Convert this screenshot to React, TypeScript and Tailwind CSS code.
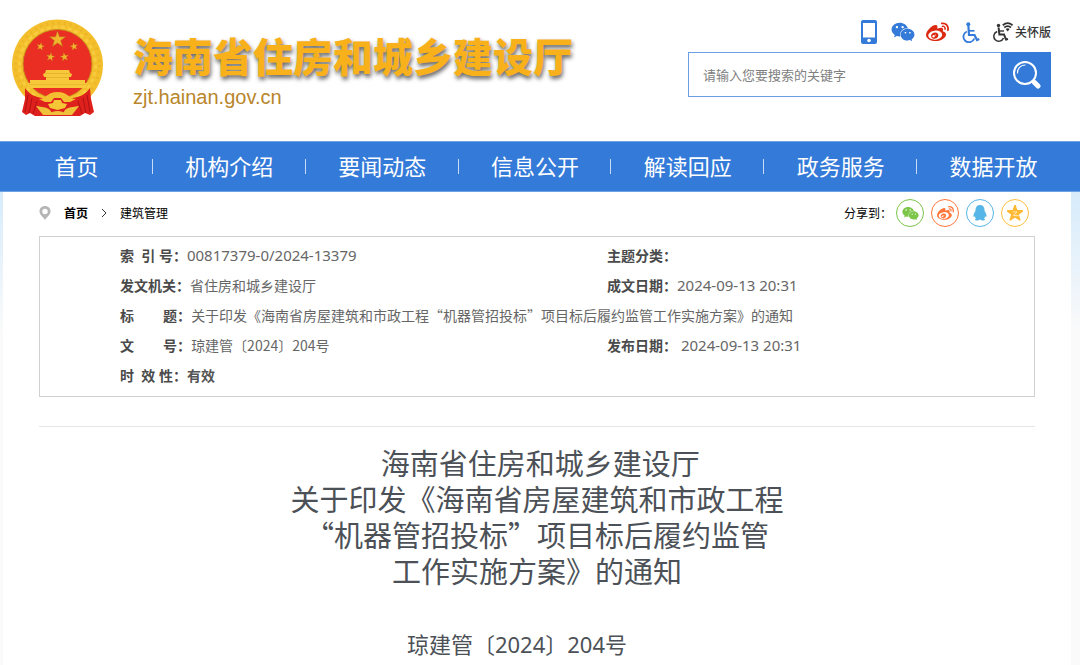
import React from 'react';
import { FaWeibo, FaWeixin } from 'react-icons/fa';

// ============================================================================
// Notice page of the housing department site: header, nav, index card, title
// ============================================================================

const NAV = ['首页', '机构介绍', '要闻动态', '信息公开', '解读回应', '政务服务', '数据开放'];

interface Field {
  label: string;
  value: string;
  numeric?: boolean;
  strong?: boolean;
}

const ROWS: Field[][] = [
  [
    { label: '索  引 号：', value: '00817379-0/2024-13379', numeric: true },
    { label: '主题分类：', value: '' },
  ],
  [
    { label: '发文机关：', value: '省住房和城乡建设厅' },
    { label: '成文日期：', value: '2024-09-13 20:31', numeric: true },
  ],
  [{ label: '标        题：', value: '关于印发《海南省房屋建筑和市政工程“机器管招投标”项目标后履约监管工作实施方案》的通知' }],
  [
    { label: '文        号：', value: '琼建管〔2024〕204号' },
    { label: '发布日期：', value: ' 2024-09-13 20:31', numeric: true },
  ],
  [{ label: '时  效 性：', value: '有效', strong: true }],
];

const TITLE = [
  ' 海南省住房和城乡建设厅',
  '关于印发《海南省房屋建筑和市政工程',
  '“机器管招投标”项目标后履约监管',
  '工作实施方案》的通知',
].join('\n');

const STAR = 'M0,-10 L2.4,-3.1 L9.5,-3.1 L3.8,1.2 L5.9,8.1 L0,4 L-5.9,8.1 L-3.8,1.2 L-9.5,-3.1 L-2.4,-3.1 Z';

const Emblem = () => (
  <svg viewBox="0 0 91 98" className="w-[91px] h-[98px] shrink-0" role="img" aria-label="国徽">
    <circle cx="45.500" cy="46" r="45.500" fill="#f3bf2c" />
    <circle cx="45.500" cy="46" r="42" fill="none" stroke="#e0a31f" strokeWidth="3" strokeDasharray="2 4" opacity=".3" />
    <circle cx="45.500" cy="46" r="38" fill="none" stroke="#ffdc55" strokeWidth="3" strokeDasharray="4 3" opacity=".45" />
    <circle cx="45.500" cy="45" r="34.500" fill="#ea2e23" stroke="#c98a1c" strokeWidth="1" />
    <g fill="#f0b62c" stroke="#bd6a1b" strokeWidth=".6">
      <path d={STAR} transform="translate(45.500 20.500) scale(.85)" />
      <path d={STAR} transform="translate(28.500 27.500) rotate(12) scale(.42)" />
      <path d={STAR} transform="translate(62 27.500) rotate(-12) scale(.42)" />
      <path d={STAR} transform="translate(38.500 38) rotate(10) scale(.45)" />
      <path d={STAR} transform="translate(52.500 38) rotate(-10) scale(.45)" />
    </g>
    {/* gate */}
    <path d="M34 51 H57 L58 54 L60 55 L59 58 H57 V61 H34 V58 H32 L31 55 L33 54 Z" fill="#f7c93a" />
    <path d="M33 54.500 H58 M34 58.500 H57" stroke="#dfa228" strokeWidth=".6" />
    <path d="M18 61 H73 V64 H76 L74 69 H17 L15 64 H18 Z" fill="#f7c93a" />
    <path d="M17 65.500 H75" stroke="#e5ad2c" strokeWidth=".6" />
    {/* drapes, ribbon and cogwheel */}
    <path d="M13 69 C17 75 23 78 30 79 H61 C68 78 74 75 78 69 L79 80 L82 93 L78 96 L73 94 L68 97 H23 L18 94 L14 96 L10 93 L13 80 Z" fill="#df211d" />
    <path d="M16 76 L13 93 M20 79 L17 94 M25 82 L21 95 M75 76 L78 93 M71 79 L74 94 M66 82 L70 95" stroke="#b01214" strokeWidth="1" fill="none" />
    <path d="M27 80 C34 80 35 73 45.500 73 S57 80 64 80 L58 83 H52 L49 79 H42 L39 83 H33 Z" fill="#f3bf30" />
    <path d="M36 85 L41 84 L42 81 H49 L50 84 L55 85 L53 89 L45.500 91 L38 89 Z" fill="#f5c636" />
    <path d="M24 87 C30 88 35 88 38 91 L41 96 H31 Z M67 87 C61 88 56 88 53 91 L50 96 H60 Z" fill="#efc03a" />
    <path d="M36 96 C38 93 42 92 45.500 92 S53 93 55 96 Z" fill="#efc03a" />
  </svg>
);

const PhoneIcon = () => (
  <svg viewBox="0 0 16 24" className="w-4 h-6">
    <rect width="16" height="24" rx="2" fill="#347ad8" />
    <rect x="2" y="3" width="12" height="14.500" fill="#fff" />
    <circle cx="8" cy="20.500" r="1.800" fill="#fff" />
  </svg>
);

const WheelchairIcon = () => (
  <svg viewBox="0 0 18 21" className="w-[18px] h-[21px]" fill="none" stroke="currentColor">
    <circle cx="6.300" cy="2.200" r="2" fill="currentColor" stroke="none" />
    <path d="M6.400 4 L7 13 H12.500 L15 18 L17.300 17" strokeWidth="2.200" />
    <path d="M7 8.800 H12.500" strokeWidth="1.700" />
    <path d="M4.800 9.500 A5.600 5.600 0 1 0 12.300 16.500" strokeWidth="1.800" />
  </svg>
);

const CareIcon = () => (
  <svg viewBox="0 0 20 20" className="w-5 h-5" fill="none" stroke="#333">
    <circle cx="5.500" cy="3.500" r="1.700" fill="#333" stroke="none" />
    <path d="M5.600 5.500 L6.400 12.500 H11 L13 17.500 L15 17" strokeWidth="2" />
    <path d="M6.500 9 H11" strokeWidth="1.400" />
    <path d="M4.200 9.500 A5 5 0 1 0 10.500 16" strokeWidth="1.500" />
    <path d="M9.800 3.300 Q14.700 -1 19.600 3.300" strokeWidth="1.800" />
    <path d="M11.300 5.500 Q14.700 2.700 18 5.500" strokeWidth="1.700" />
    <path d="M12.700 7 Q14.700 5.400 16.700 7 L14.700 9.500 Z" fill="#333" stroke="none" />
  </svg>
);

const SearchIcon = () => (
  <svg viewBox="0 0 30 30" className="w-[30px] h-[30px]" fill="none" stroke="#fff" strokeLinecap="round">
    <circle cx="14" cy="13" r="11" strokeWidth="2" />
    <path d="M6.500 13 A7.500 7.500 0 0 1 14 5" strokeWidth="1.200" />
    <path d="M21.500 21 L23 22.500" strokeWidth="2" />
    <path d="M23.500 22.500 L27 26" strokeWidth="5" />
  </svg>
);

const PinIcon = () => (
  <svg viewBox="0 0 12 14" className="w-3 h-[14px]">
    <path fillRule="evenodd" d="M6 0 C9.300 0 11.500 2.400 11.500 5.400 C11.500 8.500 8 10.500 6 14 C4 10.500 .5 8.500 .5 5.400 C.5 2.400 2.700 0 6 0 Z M6 2.800 A2.700 2.700 0 1 0 6 8.200 A2.700 2.700 0 1 0 6 2.800 Z" fill="#b5b5b5" />
  </svg>
);

const QqIcon = () => (
  <svg viewBox="0 0 14 16" className="w-[14px] h-4">
    <path d="M7 0 C10 0 11.500 2 11.500 5 C11.500 6.300 12.300 7 13 8.500 C13.800 10.500 13.700 12 13 12 C12.600 12 12 11.300 12 11.300 C12 12.400 11.300 13.200 11 13.500 C12.500 14.200 12.300 15.500 10.500 15.500 C9 15.500 7.500 15 7 14.500 C6.500 15 5 15.500 3.500 15.500 C1.700 15.500 1.500 14.200 3 13.500 C2.700 13.200 2 12.400 2 11.300 C2 11.300 1.400 12 1 12 C.3 12 .2 10.500 1 8.500 C1.700 7 2.500 6.300 2.500 5 C2.500 2 4 0 7 0 Z" fill="#56b6e7" />
  </svg>
);

const QzoneIcon = () => (
  <svg viewBox="-10 -10.500 20 20" className="w-4 h-4">
    <path d={STAR} fill="#ffb933" stroke="#ffb933" strokeWidth="2" strokeLinejoin="round" />
    <path d="M-2.800 -1.800 H2.500 L-2 2.800 H4.500" fill="none" stroke="#fff" strokeWidth=".8" />
  </svg>
);

const Header = () => (
  <header className="flex justify-between h-[141px] pl-3 pr-[29px]">
    <div className="flex items-start gap-[30px] pt-[19px]">
      <Emblem />
      <div className="pt-[10px]">
        <h1 className="text-[40px] leading-[52px] font-black text-[#f8b01b] whitespace-nowrap [text-shadow:1px_3px_4px_rgba(0,0,0,0.6)]">
          海南省住房和城乡建设厅
        </h1>
        <p className="font-['Liberation_Sans',sans-serif] text-[20px] leading-8 text-[#b8862b]">zjt.hainan.gov.cn</p>
      </div>
    </div>

    <div className="w-[363px] shrink-0 pt-5">
      <div className="flex items-center justify-end h-6 mb-2">
        <a href="#mobile" aria-label="手机版"><PhoneIcon /></a>
        <a href="#wechat" aria-label="微信" className="ml-[14px] text-[#347ad8]"><FaWeixin className="w-6 h-6" /></a>
        <a href="#weibo" aria-label="微博" className="ml-[11px] text-[#dc2a12]"><FaWeibo className="w-[23px] h-[23px]" /></a>
        <a href="#accessible" aria-label="无障碍" className="ml-[13px] text-[#347ad8]"><WheelchairIcon /></a>
        <a href="#care" className="ml-[13px] flex items-center gap-[2px] text-xs text-[#333] font-medium whitespace-nowrap">
          <CareIcon />
          关怀版
        </a>
      </div>
      <form className="flex h-[45px]" onSubmit={(e) => e.preventDefault()}>
        <input
          type="text"
          aria-label="搜索"
          placeholder="请输入您要搜索的关键字"
          className="flex-1 min-w-0 px-[14px] border border-r-0 border-[#6a9fe4] bg-white text-[13px] outline-none placeholder:text-[#808080]"
        />
        <button type="submit" aria-label="搜索" className="w-[50px] flex items-center justify-center bg-[#347ad8]">
          <SearchIcon />
        </button>
      </form>
    </div>
  </header>
);

const Nav = () => (
  <nav className="h-[51px] bg-[#347ad8] border-y border-[#6ea2e6] pr-[10px]">
    <ul className="grid grid-cols-7 h-full">
      {NAV.map((item, i) => (
        <li key={item} className="relative flex items-center justify-center">
          <a href="#nav" className="pb-1 text-[22px] leading-8 text-white whitespace-nowrap">{item}</a>
          {i < NAV.length - 1 && <span className="absolute right-0 w-px h-[15px] bg-[#c9dcf5]" />}
        </li>
      ))}
    </ul>
  </nav>
);

const Crumbs = () => (
  <div className="flex items-center justify-between h-11 pb-[2px] pr-[6px] text-xs text-black">
    <div className="flex items-center">
      <PinIcon />
      <a href="#home" className="ml-[13px] font-bold">首页</a>
      <svg viewBox="0 0 6 10" className="w-[6px] h-[10px] mx-[13px]" fill="none" stroke="#333"><path d="M1 1 L5 5 L1 9" /></svg>
      <a href="#section">建筑管理</a>
    </div>
    <div className="flex items-center">
      <span className="mr-1">分享到：</span>
      <div className="flex gap-[7px]">
        <button aria-label="分享到微信" className="w-7 h-7 rounded-full border border-[#7bc549] text-[#7bc549] flex items-center justify-center"><FaWeixin className="w-[17px] h-[17px]" /></button>
        <button aria-label="分享到微博" className="w-7 h-7 rounded-full border border-[#ff763b] text-[#ff763b] flex items-center justify-center"><FaWeibo className="w-[17px] h-[17px]" /></button>
        <button aria-label="分享到QQ" className="w-7 h-7 rounded-full border border-[#56b6e7] flex items-center justify-center"><QqIcon /></button>
        <button aria-label="分享到QQ空间" className="w-7 h-7 rounded-full border border-[#ffbe3d] flex items-center justify-center"><QzoneIcon /></button>
      </div>
    </div>
  </div>
);

const valueClass = (f: Field) => {
  if (f.numeric) return "font-['Noto_Sans','Noto_Sans_CJK_SC',sans-serif] text-[15px]";
  return f.strong ? 'font-bold text-[#555]' : '';
};

const IndexCard = () => (
  <div className="border border-[#d2d2d2] pl-20 pt-[3px] pb-[6px]">
    <table className="w-full table-fixed text-sm text-[#666]">
      <colgroup>
        <col className="w-[487px]" />
        <col />
      </colgroup>
      <tbody>
        {ROWS.map((row) => (
          <tr key={row[0].label} className="h-[30px]">
            {row.map((f) => (
              <td key={f.label} colSpan={row.length === 1 ? 2 : 1} className="p-0 whitespace-pre leading-7">
                <b className="font-bold text-[#4a4a4a] font-['Noto_Sans','Noto_Sans_CJK_SC',sans-serif]">{f.label}</b>
                <span className={valueClass(f)}>{f.value}</span>
              </td>
            ))}
          </tr>
        ))}
      </tbody>
    </table>
  </div>
);

const App: React.FC = () => (
  <div lang="zh-CN" className="min-h-screen bg-white font-['Noto_Sans_CJK_SC',sans-serif]">
    <Header />
    <Nav />
    <div className="bg-[#fafafa] bg-[linear-gradient(#d6ebfb,#fafafa_140px)] pl-[3px] pr-[9px]">
      <main className="bg-white pl-9 pr-9 min-h-[473px]">
        <Crumbs />
        <IndexCard />
        <article className="mt-[29px] border-t border-[#e6e6e6] pt-[17px] text-center text-[#4c5157]">
          <h2 className="text-[29px] leading-9 whitespace-pre-wrap">{TITLE}</h2>
          <p className="mt-10 pr-10 text-[22px] leading-8 font-['Noto_Sans','Noto_Sans_CJK_SC',sans-serif]">
            琼建管〔2024〕204号
          </p>
        </article>
      </main>
    </div>
  </div>
);

export default App;
